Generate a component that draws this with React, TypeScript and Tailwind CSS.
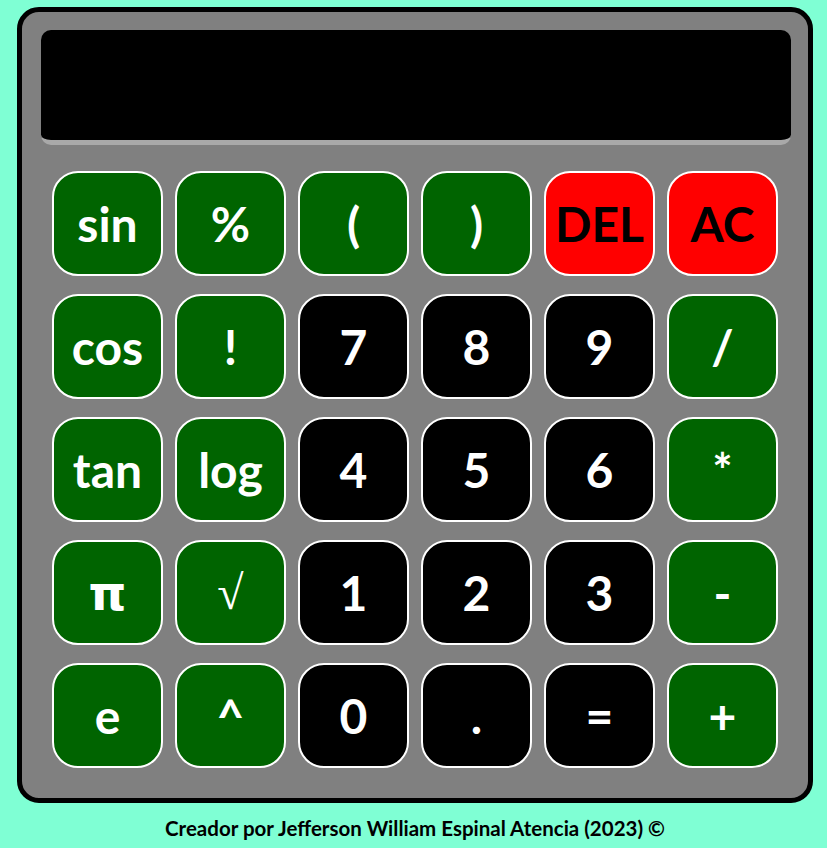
const keys: { label: string; kind: "fn" | "num" | "del"; font?: string }[] = [
  { label: "sin", kind: "fn" },
  { label: "%", kind: "fn" },
  { label: "(", kind: "fn" },
  { label: ")", kind: "fn" },
  { label: "DEL", kind: "del" },
  { label: "AC", kind: "del" },
  { label: "cos", kind: "fn" },
  { label: "!", kind: "fn" },
  { label: "7", kind: "num" },
  { label: "8", kind: "num" },
  { label: "9", kind: "num" },
  { label: "/", kind: "fn" },
  { label: "tan", kind: "fn" },
  { label: "log", kind: "fn" },
  { label: "4", kind: "num" },
  { label: "5", kind: "num" },
  { label: "6", kind: "num" },
  { label: "*", kind: "fn" },
  { label: "π", kind: "fn", font: "font-['DejaVu_Sans',sans-serif]" },
  { label: "√", kind: "fn", font: "font-['Liberation_Serif',serif] font-normal" },
  { label: "1", kind: "num" },
  { label: "2", kind: "num" },
  { label: "3", kind: "num" },
  { label: "-", kind: "fn" },
  { label: "e", kind: "fn" },
  { label: "^", kind: "fn" },
  { label: "0", kind: "num" },
  { label: ".", kind: "num" },
  { label: "=", kind: "num" },
  { label: "+", kind: "fn" },
];

const kindClass = {
  fn: "bg-[#006400] text-white",
  num: "bg-black text-white",
  del: "bg-[#ff0000] text-black",
};

export default function App() {
  return (
    <div className="min-h-[848px] bg-[#7fffd4] pl-[17px] pt-[7px] flex flex-col items-start font-['Lato',sans-serif]">
      <div className="w-[796px] h-[796px] bg-[#808080] border-[5px] border-black rounded-[22px] flex flex-col">
        <div className="ml-[19px] mt-[18px] w-[750px] h-[115px] bg-black rounded-[10px] border-b-[5px] border-[#a9a9a9]" />
        <div className="ml-[30px] mt-[26px] grid grid-cols-[repeat(6,111px)] grid-rows-[repeat(5,105px)] gap-x-[12px] gap-y-[18px]">
          {keys.map((k) => (
            <button
              key={k.label}
              className={`${kindClass[k.kind]} border-2 border-white rounded-[26px] flex items-center justify-center text-[48px] font-bold leading-none ${k.font ?? ""}`}
            >
              {k.label}
            </button>
          ))}
        </div>
      </div>
      <p className="w-[796px] mt-[11px] text-center text-[20.5px] font-bold text-black leading-[28px]">
        Creador por Jefferson William Espinal Atencia (2023) ©
      </p>
    </div>
  );
}
